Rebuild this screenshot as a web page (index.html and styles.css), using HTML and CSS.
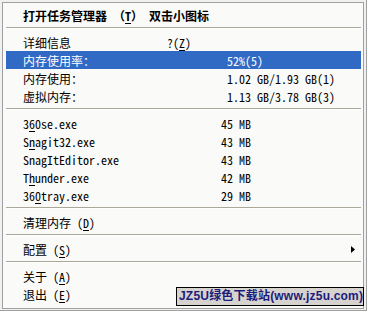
FILE: index.html
```html
<!DOCTYPE html>
<html lang="zh-CN">
<head>
    <meta charset="UTF-8">
    <meta name="viewport" content="width=device-width, initial-scale=1.0">
    <title>内存菜单</title>
    <link rel="stylesheet" href="styles.css">
</head>
<body>
    <div class="frame">
        <div class="menu">
            <div class="item title">打开任务管理器 （<u>T</u>） 双击小图标</div>
            <div class="sep"></div>

            <div class="item"><span class="lbl w-hint">详细信息</span><span>?(<u>Z</u>)</span></div>
            <div class="item hot"><span class="lbl w-info">内存使用率：</span><span>52%(5)</span></div>
            <div class="item"><span class="lbl w-info">内存使用：</span><span>1.02 GB/1.93 GB(1)</span></div>
            <div class="item"><span class="lbl w-info">虚拟内存：</span><span>1.13 GB/3.78 GB(3)</span></div>
            <div class="sep"></div>

            <div class="item"><span class="lbl w-proc">3<u>6</u>0se.exe</span><span>45 MB</span></div>
            <div class="item"><span class="lbl w-proc">S<u>n</u>agit32.exe</span><span>43 MB</span></div>
            <div class="item"><span class="lbl w-proc">SnagItEditor.exe</span><span>43 MB</span></div>
            <div class="item"><span class="lbl w-proc">T<u>h</u>under.exe</span><span>42 MB</span></div>
            <div class="item"><span class="lbl w-proc">36<u>0</u>tray.exe</span><span>29 MB</span></div>
            <div class="sep"></div>

            <div class="item">清理内存 (<u>D</u>)</div>
            <div class="sep"></div>

            <div class="item"><span>配置 (<u>S</u>)</span><svg class="arrow" width="4" height="7" viewBox="0 0 4 7"><polygon points="0,0 4,3.5 0,7" fill="#000"/></svg></div>
            <div class="sep"></div>

            <div class="item">关于 (<u>A</u>)</div>
            <div class="item">退出 (<u>E</u>)</div>
        </div>
        <div class="badge">JZ5U绿色下载站(www.jz5u.com)</div>
    </div>
</body>
</html>
```
FILE: styles.css
```css
body {
    margin: 0;
    background-color: #f0f0f0;
    font-family: "Noto Sans Mono CJK SC", "Noto Sans CJK SC", monospace;
    font-size: 12px;
    color: #000;
}

.frame {
    position: relative;
    width: 367px;
    height: 311px;
    box-sizing: border-box;
    padding: 2px 2px 1px 2px;
    border-right: 1px solid #a0a0a0;
    border-bottom: 1px solid #a0a0a0;
}

.menu {
    height: 307px;
    box-sizing: border-box;
    border: 1px solid #a0a0a0;
    background-color: #fafaf9;
    padding: 3px 2px 4px 3px;
}

.item {
    display: flex;
    align-items: center;
    height: 18px;
    padding-left: 17px;
    white-space: pre;
}

.item u {
    text-decoration-thickness: 1px;
    text-underline-offset: 2px;
}

.title {
    font-weight: bold;
}

.hot {
    background-color: #316ac5;
    color: #fff;
}

.lbl {
    flex: none;
}

.w-hint {
    width: 144px;
}

.w-info {
    width: 204px;
}

.w-proc {
    width: 198px;
}

.sep {
    height: 1px;
    margin: 3px 0 4px;
    background-color: #aca899;
    border-bottom: 1px solid #fff;
}

.arrow {
    margin-left: auto;
    margin-right: 6px;
}

.badge {
    position: absolute;
    left: 176px;
    top: 287px;
    width: 188px;
    height: 19px;
    box-sizing: border-box;
    border: 1px solid #000;
    background-color: #d6d3ce;
    color: #1c1c7c;
    font-family: "Liberation Sans", "Noto Sans CJK SC", sans-serif;
    font-size: 12px;
    font-weight: bold;
    line-height: 17px;
    padding-left: 2px;
    letter-spacing: 0.2px;
    white-space: nowrap;
}
```
